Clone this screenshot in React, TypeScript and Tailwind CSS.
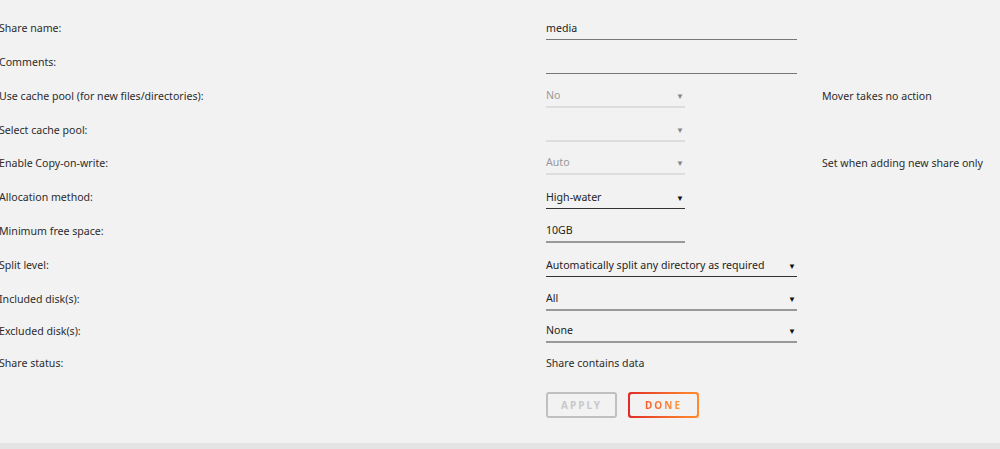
import React from 'react'

type Field = {
  label: string
  value?: string
  kind: 'text' | 'select' | 'plain'
  wide?: boolean
  disabled?: boolean
  line?: string
  note?: string
  h: string
}

const fields: Field[] = [
  { label: 'Share name:', value: 'media', kind: 'text', wide: true, line: 'border-b-[1.5px] border-[#777]', h: 'h-[34px]' },
  { label: 'Comments:', value: '', kind: 'text', wide: true, line: 'border-b-[1.5px] border-[#777]', h: 'h-[34px]' },
  { label: 'Use cache pool (for new files/directories):', value: 'No', kind: 'select', disabled: true, line: 'border-b-2 border-[#ddd]', note: 'Mover takes no action', h: 'h-[34px]' },
  { label: 'Select cache pool:', value: '', kind: 'select', disabled: true, line: 'border-b-2 border-[#ddd]', h: 'h-[34px]' },
  { label: 'Enable Copy-on-write:', value: 'Auto', kind: 'select', disabled: true, line: 'border-b-2 border-[#ddd]', note: 'Set when adding new share only', h: 'h-[33px]' },
  { label: 'Allocation method:', value: 'High-water', kind: 'select', line: 'border-b-[1.5px] border-[#333]', h: 'h-[34px]' },
  { label: 'Minimum free space:', value: '10GB', kind: 'text', line: 'border-b-2 border-[#999]', h: 'h-[34px]' },
  { label: 'Split level:', value: 'Automatically split any directory as required', kind: 'select', wide: true, line: 'border-b-[1.5px] border-[#333]', h: 'h-[34px]' },
  { label: 'Included disk(s):', value: 'All', kind: 'select', wide: true, line: 'border-b-2 border-[#999]', h: 'h-[34px]' },
  { label: 'Excluded disk(s):', value: 'None', kind: 'select', wide: true, line: 'border-b-2 border-[#999]', h: 'h-[32px]' },
]

function Row({ f }: { f: Field }) {
  return (
    <div className={'flex items-end ' + f.h}>
      <div className="w-[547px] h-[26px] pt-[4px] flex items-center ml-[-1px]">{f.label}</div>
      <div
        className={
          'h-[26px] pt-[4px] flex items-center justify-between pr-[1px] ' +
          (f.wide ? 'w-[251px] ' : 'w-[139px] ') +
          f.line +
          (f.disabled ? ' text-[#999]' : ' text-[#222]')
        }
      >
        <span>{f.value}</span>
        {f.kind === 'select' && (
          <span className={'text-[8px] ' + (f.disabled ? 'text-[#888]' : 'text-[#111]')}>▼</span>
        )}
      </div>
      {f.note && (
        <div className={'h-[26px] pt-[4px] flex items-center ' + (f.wide ? 'ml-[25px]' : 'ml-[137px]')}>{f.note}</div>
      )}
    </div>
  )
}

export default function App() {
  return (
    <div
      className="w-[1000px] h-[449px] bg-[#f2f2f2] text-[#2c2c2c] text-[10.6px] overflow-hidden flex flex-col"
      style={{ fontFamily: '"Noto Sans", "Open Sans", sans-serif' }}
    >
      <div className="pt-[6px] flex-1">
        {fields.map((f, i) => (
          <Row key={i} f={f} />
        ))}
        <div className="flex items-center h-[36px] pt-[6px]">
          <div className="w-[547px] ml-[-1px]">Share status:</div>
          <div>Share contains data</div>
        </div>
        <div className="flex gap-[11px] mt-[13px] ml-[546px]">
          <button className="w-[71px] h-[26px] rounded-[3px] border-2 border-[#c0c0c0] text-[#c8c8c8] font-bold text-[10px] tracking-[2px]">
            APPLY
          </button>
          <div className="w-[71px] h-[26px] rounded-[3px] p-[2px] bg-linear-to-r from-[#e22828] to-[#ff8c2f]">
            <div className="w-full h-full rounded-[2px] bg-[#f2f2f2] flex items-center justify-center">
              <span className="font-bold text-[10px] tracking-[2px] bg-linear-to-r from-[#f25a2a] to-[#ff9a3a] bg-clip-text text-transparent">
                DONE
              </span>
            </div>
          </div>
        </div>
      </div>
      <div className="h-[6px] bg-[#e4e4e4]" />
    </div>
  )
}
